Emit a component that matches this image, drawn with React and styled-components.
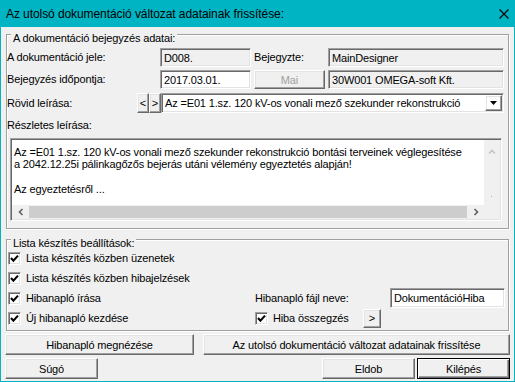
import React from "react";
import styled, { createGlobalStyle, css } from "styled-components";

const GlobalStyle = createGlobalStyle`
  html, body {
    margin: 0;
    padding: 0;
    background: #ffffff;
  }
  body {
    font-family: "Liberation Sans", Arial, sans-serif;
    font-size: 11px;
    letter-spacing: -0.15px;
    color: #000;
  }
`;

// classic 3D edges
const sunken = css`
  border: 1px solid;
  border-color: #a0a0a0 #ffffff #ffffff #a0a0a0;
  box-shadow: inset 1px 1px 0 #696969, inset -1px -1px 0 #e3e3e3;
`;

const raised = css`
  border: 1px solid;
  border-color: #ffffff #696969 #696969 #ffffff;
  box-shadow: inset -1px -1px 0 #a0a0a0, inset 1px 1px 0 #e3e3e3;
`;

const Window = styled.div`
  width: 515px;
  height: 382px;
  box-sizing: border-box;
  border: 1px solid #00b4c3;
  background: #f0f0f0;
  display: flex;
  flex-direction: column;
  overflow: hidden;
`;

const TitleBar = styled.div`
  height: 26px;
  flex: none;
  background: #00b4c3;
  display: flex;
  align-items: center;
  padding: 0 5px 0 5px;
  font-size: 12px;
  letter-spacing: -0.08px;
  color: #000;
`;

const Title = styled.span`
  flex: 1;
  white-space: nowrap;
`;

const Content = styled.div`
  flex: 1;
  display: flex;
  flex-direction: column;
  padding: 7px 5px 3px;
`;

const GroupBox = styled.div`
  border: 1px solid #a0a0a0;
  box-shadow: inset 1px 1px 0 #ffffff, 1px 1px 0 #ffffff;
  display: flex;
  flex-direction: column;
  padding: 0 3px ${p => p.$bottom}px 0;
  margin-top: ${p => p.$top || 0}px;
`;

const Legend = styled.div`
  align-self: flex-start;
  margin: -3px 0 ${p => p.$after || 0}px 4px;
  padding: 0 2px;
  height: 13px;
  line-height: 13px;
  background: #f0f0f0;
  white-space: nowrap;
`;

const FieldRow = styled.div`
  display: flex;
  align-items: center;
  height: ${p => p.$h || 19}px;
  margin-top: ${p => p.$mt || 0}px;
`;

const Label = styled.span`
  flex: none;
  width: ${p => (p.$w ? `${p.$w}px` : "auto")};
  margin-left: ${p => p.$ml || 0}px;
  white-space: nowrap;
  line-height: 13px;
`;

const Field = styled.div`
  ${sunken}
  box-sizing: border-box;
  flex: none;
  width: ${p => p.$w}px;
  height: 100%;
  margin-left: ${p => p.$ml || 0}px;
  background: ${p => (p.$white ? "#ffffff" : "#f0f0f0")};
  display: flex;
  align-items: center;
  padding-left: 3px;
  white-space: nowrap;
  overflow: hidden;
`;

const Button = styled.div`
  ${raised}
  box-sizing: border-box;
  flex: none;
  width: ${p => p.$w}px;
  height: ${p => p.$h || 21}px;
  margin-left: ${p => p.$ml || 0}px;
  display: flex;
  align-items: center;
  justify-content: center;
  color: ${p => (p.$disabled ? "#a0a0a0" : "#000")};
  white-space: nowrap;
  ${p =>
    p.$default &&
    css`
      border: 1px solid #000;
      box-shadow: inset 1px 1px 0 #ffffff, inset -1px -1px 0 #696969,
        inset -2px -2px 0 #a0a0a0;
    `}
`;

const Combo = styled(Field)`
  padding-right: 0;
`;

const ComboText = styled.span`
  flex: 1;
  overflow: hidden;
`;

const DropButton = styled.div`
  ${raised}
  box-sizing: border-box;
  width: 17px;
  height: 16px;
  margin-right: 1px;
  display: flex;
  align-items: center;
  justify-content: center;
`;

const Memo = styled.div`
  ${sunken}
  box-sizing: border-box;
  width: 492px;
  height: 83px;
  margin: 6px 0 0 3px;
  padding: 1px;
  display: grid;
  grid-template-columns: 1fr 16px;
  grid-template-rows: 1fr 14px;
  background: #f0f0f0;
`;

const MemoText = styled.div`
  background: #ffffff;
  padding: 6px 0 0 2px;
  line-height: 12.4px;
  white-space: pre;
  overflow: hidden;
`;

const VScroll = styled.div`
  background: #f0f0f0;
  display: flex;
  flex-direction: column;
  align-items: center;
  justify-content: space-between;
  padding: 9px 0 7px;
`;

const HScroll = styled.div`
  background: #f0f0f0;
  display: flex;
  align-items: center;
`;

const ScrollArrow = styled.div`
  width: 17px;
  height: 100%;
  flex: none;
  display: flex;
  align-items: center;
  justify-content: center;
`;

const Thumb = styled.div`
  flex: 1;
  height: 12px;
  background: #cdcdcd;
`;

const Corner = styled.div`
  background: #f0f0f0;
`;

const Columns = styled.div`
  display: flex;
`;

const Column = styled.div`
  display: flex;
  flex-direction: column;
  justify-content: flex-end;
  width: ${p => (p.$w ? `${p.$w}px` : "auto")};
  flex: ${p => (p.$w ? "none" : 1)};
`;

const CheckRow = styled.div`
  height: 20px;
  display: flex;
  align-items: center;
  padding-left: ${p => p.$pl || 0}px;
`;

const Box = styled.div`
  ${sunken}
  box-sizing: border-box;
  width: 13px;
  height: 13px;
  flex: none;
  background: #ffffff;
  display: flex;
  align-items: center;
  justify-content: center;
  margin-right: 5px;
`;

const ButtonRow = styled.div`
  display: flex;
  justify-content: ${p => p.$justify || "space-between"};
  margin: 3px -1px 0;
`;

const Spacer = styled.div`
  flex: 1;
`;

const CloseIcon = () => (
  <svg width="10" height="10" viewBox="0 0 10 10">
    <path d="M0.5 0.5 L9.5 9.5 M9.5 0.5 L0.5 9.5" stroke="#000" strokeWidth="1.1" />
  </svg>
);

const Check = () => (
  <svg width="9" height="9" viewBox="0 0 9 9">
    <path d="M1 4 L3.4 6.6 L8 1.6" fill="none" stroke="#000" strokeWidth="2.1" />
  </svg>
);

const Chevron = ({ dir, color = "#606060" }) => {
  const d = {
    left: "M4.5 1 L1.5 4 L4.5 7",
    right: "M1.5 1 L4.5 4 L1.5 7",
    up: "M1 4.5 L4 1.5 L7 4.5",
  }[dir];
  const horizontal = dir === "left" || dir === "right";
  return (
    <svg width={horizontal ? 6 : 8} height={horizontal ? 8 : 6} viewBox={horizontal ? "0 0 6 8" : "0 0 8 6"}>
      <path d={d} fill="none" stroke={color} strokeWidth="1.6" />
    </svg>
  );
};

const DownTriangle = () => (
  <svg width="7" height="4" viewBox="0 0 7 4">
    <path d="M0 0 H7 L3.5 4 Z" fill="#000" />
  </svg>
);

const CheckBox = ({ children, labelWidth }) => (
  <>
    <Box>
      <Check />
    </Box>
    <Label $w={labelWidth}>{children}</Label>
  </>
);

const memoText = `Az =E01 1.sz. 120 kV-os vonali mező szekunder rekonstrukció bontási terveinek véglegesítése
a 2042.12.25i pálinkagőzős bejerás utáni vélemény egyeztetés alapján!

Az egyeztetésről ...`;

export default function App() {
  return (
    <>
      <GlobalStyle />
      <Window>
        <TitleBar>
          <Title>Az utolsó dokumentáció változat adatainak frissítése:</Title>
          <CloseIcon />
        </TitleBar>
        <Content>
          <GroupBox $bottom={7}>
            <Legend>A dokumentáció bejegyzés adatai:</Legend>
            <FieldRow $mt={3}>
              <Label $w={153}>A dokumentáció jele:</Label>
              <Field $w={91}>D008.</Field>
              <Label $w={74} $ml={3}>Bejegyzte:</Label>
              <Field $w={176}>MainDesigner</Field>
            </FieldRow>
            <FieldRow $mt={3}>
              <Label $w={153}>Bejegyzés időpontja:</Label>
              <Field $w={91} $white>2017.03.01.</Field>
              <Button $w={71} $h={19} $ml={3} $disabled>Mai</Button>
              <Field $w={176} $ml={3}>30W001 OMEGA-soft Kft.</Field>
            </FieldRow>
            <FieldRow $mt={4} $h={20}>
              <Label $w={130}>Rövid leírása:</Label>
              <Button $w={12} $h={20}>&lt;</Button>
              <Button $w={12} $h={20}>&gt;</Button>
              <Combo $w={343} $white>
                <ComboText>Az =E01 1.sz. 120 kV-os vonali mező szekunder rekonstrukció</ComboText>
                <DropButton>
                  <DownTriangle />
                </DropButton>
              </Combo>
            </FieldRow>
            <FieldRow $mt={6} $h={13}>
              <Label>Részletes leírása:</Label>
            </FieldRow>
            <Memo>
              <MemoText>{memoText}</MemoText>
              <VScroll>
                <Chevron dir="up" color="#c4c4c4" />
                <svg width="2" height="2" viewBox="0 0 2 2">
                  <rect width="1" height="1" fill="#b0b0b0" />
                </svg>
              </VScroll>
              <HScroll>
                <ScrollArrow>
                  <Chevron dir="left" />
                </ScrollArrow>
                <Thumb />
                <ScrollArrow>
                  <Chevron dir="right" />
                </ScrollArrow>
              </HScroll>
              <Corner />
            </Memo>
          </GroupBox>

          <GroupBox $top={10} $bottom={2}>
            <Legend $after={-2}>Lista készítés beállítások:</Legend>
            <Columns>
              <Column $w={248}>
                <CheckRow $pl={1}>
                  <CheckBox>Lista készítés közben üzenetek</CheckBox>
                </CheckRow>
                <CheckRow $pl={1}>
                  <CheckBox>Lista készítés közben hibajelzések</CheckBox>
                </CheckRow>
                <CheckRow $pl={1}>
                  <CheckBox>Hibanapló írása</CheckBox>
                </CheckRow>
                <CheckRow $pl={1}>
                  <CheckBox>Új hibanapló kezdése</CheckBox>
                </CheckRow>
              </Column>
              <Column>
                <CheckRow>
                  <Label $w={135}>Hibanapló fájl neve:</Label>
                  <Field $w={115} $white>DokumentációHiba</Field>
                </CheckRow>
                <CheckRow>
                  <CheckBox labelWidth={90}>Hiba összegzés</CheckBox>
                  <Button $w={18} $h={19}>&gt;</Button>
                </CheckRow>
              </Column>
            </Columns>
          </GroupBox>

          <ButtonRow>
            <Button $w={189}>Hibanapló megnézése</Button>
            <Button $w={307}>Az utolsó dokumentáció változat adatainak frissítése</Button>
          </ButtonRow>
          <ButtonRow>
            <Button $w={93}>Súgó</Button>
            <Spacer />
            <Button $w={93}>Eldob</Button>
            <Button $w={93} $ml={2} $default>Kilépés</Button>
          </ButtonRow>
        </Content>
      </Window>
    </>
  );
}
